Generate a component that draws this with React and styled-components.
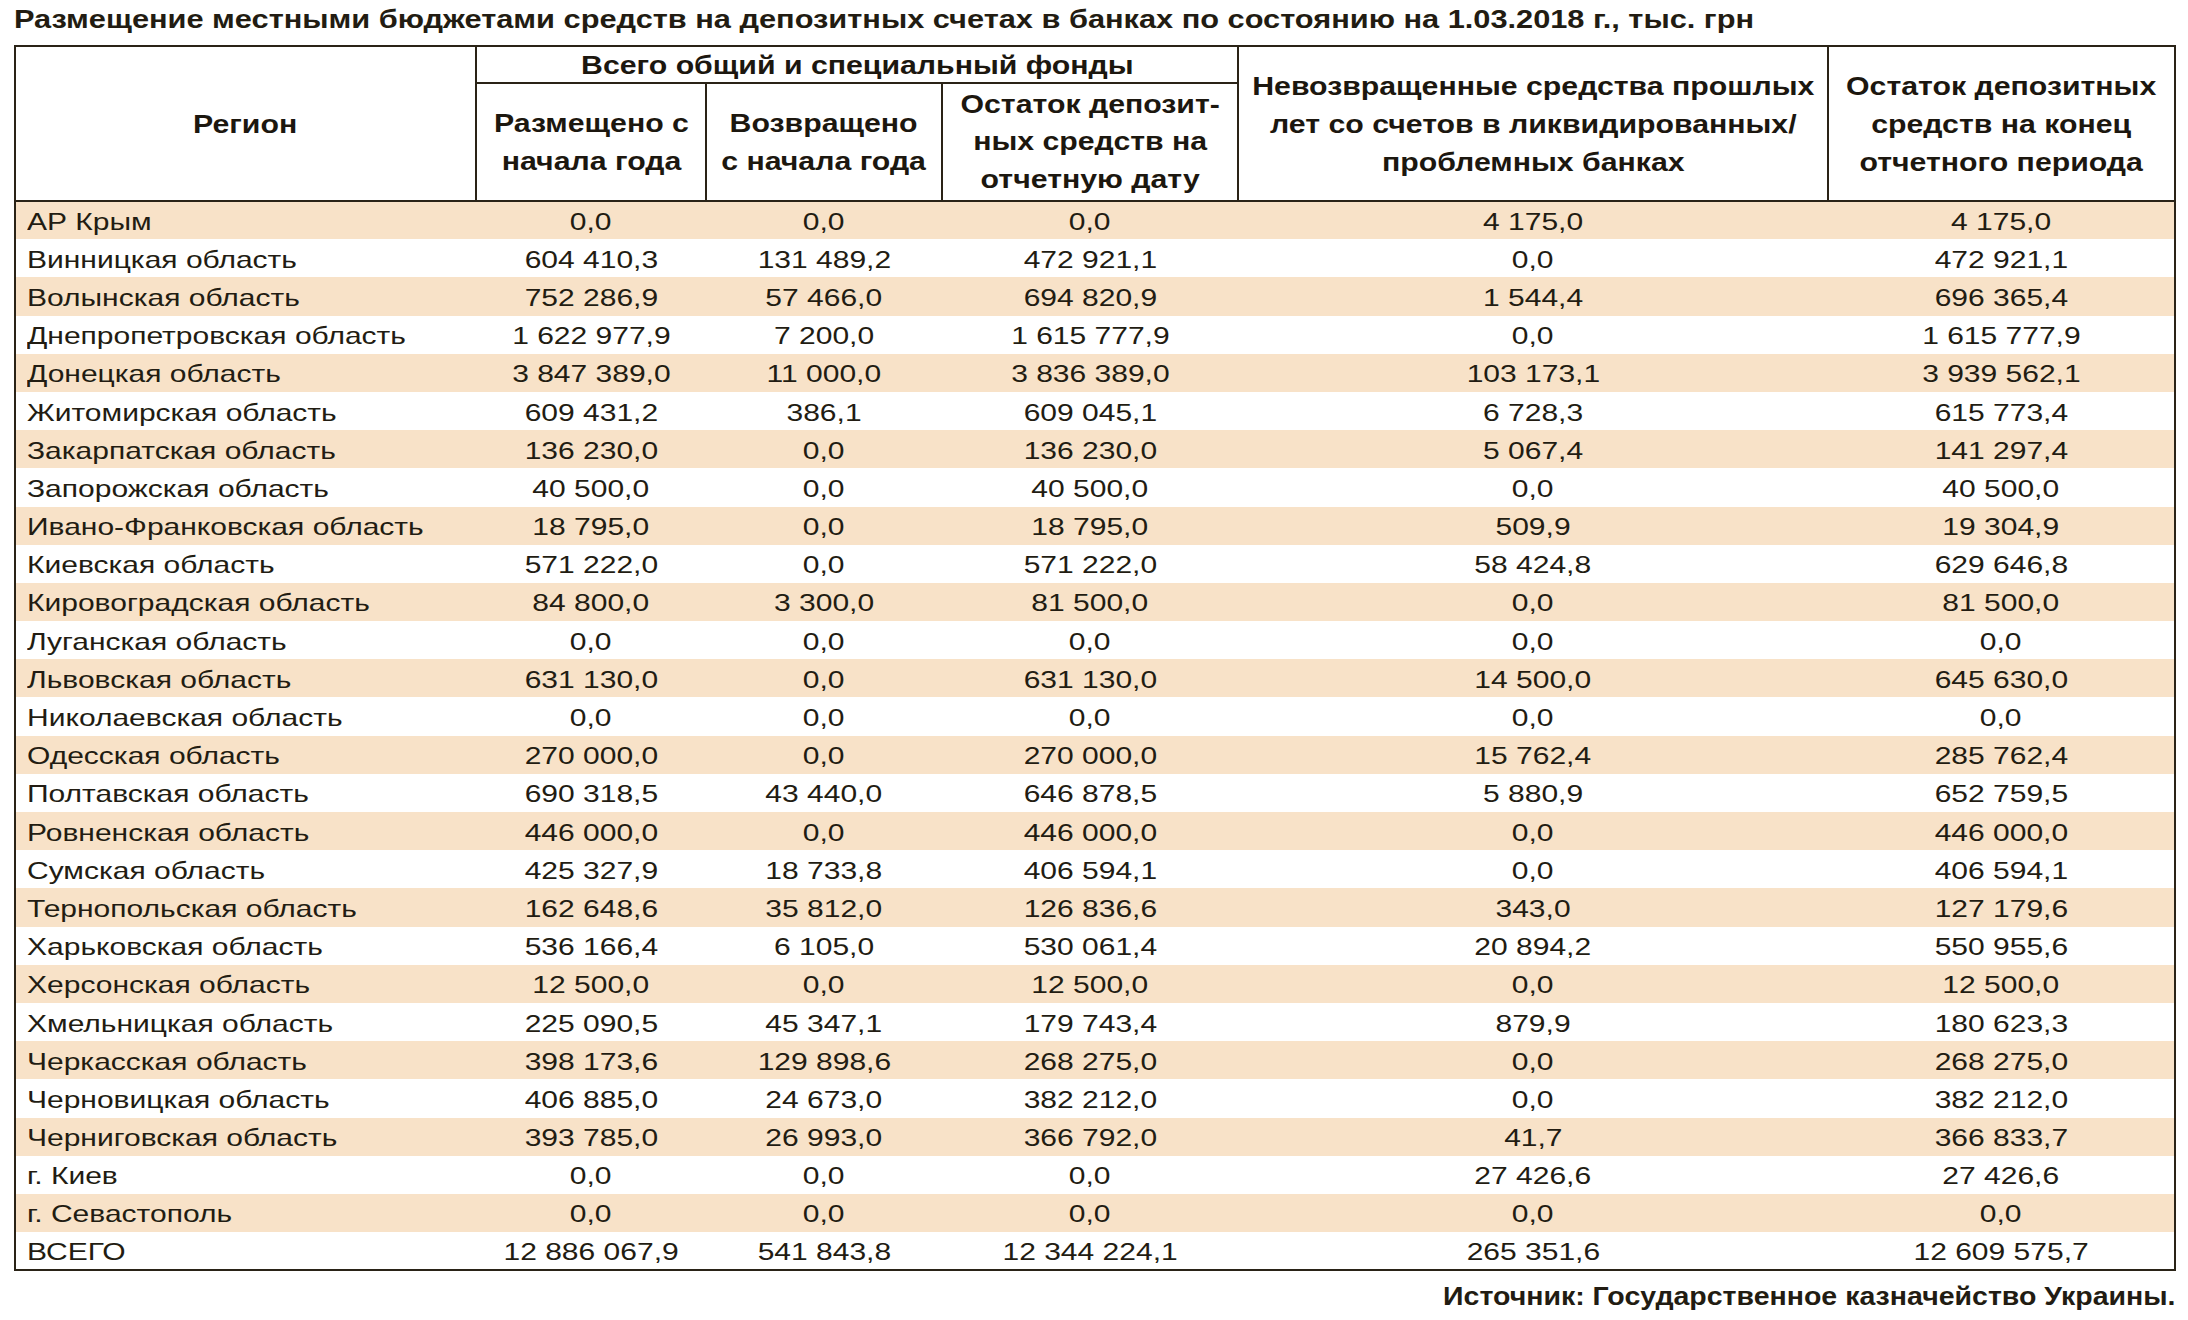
import styled, { createGlobalStyle } from 'styled-components';

const GlobalStyle = createGlobalStyle`
  body {
    margin: 0;
    background: #ffffff;
  }
`;

const rows = [
  ['АР Крым', '0,0', '0,0', '0,0', '4 175,0', '4 175,0'],
  ['Винницкая область', '604 410,3', '131 489,2', '472 921,1', '0,0', '472 921,1'],
  ['Волынская область', '752 286,9', '57 466,0', '694 820,9', '1 544,4', '696 365,4'],
  ['Днепропетровская область', '1 622 977,9', '7 200,0', '1 615 777,9', '0,0', '1 615 777,9'],
  ['Донецкая область', '3 847 389,0', '11 000,0', '3 836 389,0', '103 173,1', '3 939 562,1'],
  ['Житомирская область', '609 431,2', '386,1', '609 045,1', '6 728,3', '615 773,4'],
  ['Закарпатская область', '136 230,0', '0,0', '136 230,0', '5 067,4', '141 297,4'],
  ['Запорожская область', '40 500,0', '0,0', '40 500,0', '0,0', '40 500,0'],
  ['Ивано-Франковская область', '18 795,0', '0,0', '18 795,0', '509,9', '19 304,9'],
  ['Киевская область', '571 222,0', '0,0', '571 222,0', '58 424,8', '629 646,8'],
  ['Кировоградская область', '84 800,0', '3 300,0', '81 500,0', '0,0', '81 500,0'],
  ['Луганская область', '0,0', '0,0', '0,0', '0,0', '0,0'],
  ['Львовская область', '631 130,0', '0,0', '631 130,0', '14 500,0', '645 630,0'],
  ['Николаевская область', '0,0', '0,0', '0,0', '0,0', '0,0'],
  ['Одесская область', '270 000,0', '0,0', '270 000,0', '15 762,4', '285 762,4'],
  ['Полтавская область', '690 318,5', '43 440,0', '646 878,5', '5 880,9', '652 759,5'],
  ['Ровненская область', '446 000,0', '0,0', '446 000,0', '0,0', '446 000,0'],
  ['Сумская область', '425 327,9', '18 733,8', '406 594,1', '0,0', '406 594,1'],
  ['Тернопольская область', '162 648,6', '35 812,0', '126 836,6', '343,0', '127 179,6'],
  ['Харьковская область', '536 166,4', '6 105,0', '530 061,4', '20 894,2', '550 955,6'],
  ['Херсонская область', '12 500,0', '0,0', '12 500,0', '0,0', '12 500,0'],
  ['Хмельницкая область', '225 090,5', '45 347,1', '179 743,4', '879,9', '180 623,3'],
  ['Черкасская область', '398 173,6', '129 898,6', '268 275,0', '0,0', '268 275,0'],
  ['Черновицкая область', '406 885,0', '24 673,0', '382 212,0', '0,0', '382 212,0'],
  ['Черниговская область', '393 785,0', '26 993,0', '366 792,0', '41,7', '366 833,7'],
  ['г. Киев', '0,0', '0,0', '0,0', '27 426,6', '27 426,6'],
  ['г. Севастополь', '0,0', '0,0', '0,0', '0,0', '0,0'],
  ['ВСЕГО', '12 886 067,9', '541 843,8', '12 344 224,1', '265 351,6', '12 609 575,7'],
];

const colWidths = [461, 230, 236, 296, 590, 347];

const ink = '#221c12';
const rule = '#2a2317';

const Page = styled.div`
  box-sizing: border-box;
  width: 2188px;
  padding: 4px 0 0 14px;
  font-family: 'Liberation Sans', Arial, sans-serif;
  color: ${ink};
`;

// the print face is wider than Arial, so glyphs get stretched a bit
const Stretch = styled.span`
  display: inline-block;
  white-space: nowrap;
  transform: scaleX(${(props) => props.$scale || 1.25});
  transform-origin: ${(props) => props.$origin || 'center'};
`;

const Title = styled.h1`
  margin: 0 0 11px;
  font-size: 25px;
  line-height: 30px;
  font-weight: 700;
`;

const Table = styled.table`
  width: 2161px;
  table-layout: fixed;
  border-collapse: collapse;
  border: 2px solid ${rule};
`;

const HeadRow = styled.tr`
  height: ${(props) => props.$h}px;
`;

const HeadCell = styled.th`
  padding: 0;
  border: 2px solid ${rule};
  font-size: 25px;
  line-height: ${(props) => props.$lh || 38}px;
  font-weight: 700;
  text-align: center;
  vertical-align: middle;
  color: #1c170f;
`;

const BodyRow = styled.tr`
  height: 38.2px;
  background: ${(props) => (props.$shade ? '#f8e2c8' : '#ffffff')};
`;

const Cell = styled.td`
  padding: 3px 0 0 ${(props) => (props.$left ? '11px' : '0')};
  font-size: 24px;
  line-height: 34px;
  text-align: ${(props) => (props.$left ? 'left' : 'center')};
  vertical-align: middle;
  white-space: nowrap;
`;

const Source = styled.div`
  width: 2161px;
  margin-top: 10px;
  text-align: right;
  font-size: 25px;
  line-height: 30px;
  font-weight: 700;
`;

function HeadText({ children }) {
  return <Stretch $scale={1.21}>{children}</Stretch>;
}

function DepositTable() {
  return (
    <Table>
      <colgroup>
        {colWidths.map((w, i) => (
          <col key={i} style={{ width: w }} />
        ))}
      </colgroup>
      <thead>
        <HeadRow $h={37}>
          <HeadCell rowSpan={2}>
            <HeadText>Регион</HeadText>
          </HeadCell>
          <HeadCell colSpan={3} $lh={32}>
            <HeadText>Всего общий и специальный фонды</HeadText>
          </HeadCell>
          <HeadCell rowSpan={2}>
            <HeadText>
              Невозвращенные средства прошлых
              <br />
              лет со счетов в ликвидированных/
              <br />
              проблемных банках
            </HeadText>
          </HeadCell>
          <HeadCell rowSpan={2}>
            <HeadText>
              Остаток депозитных
              <br />
              средств на конец
              <br />
              отчетного периода
            </HeadText>
          </HeadCell>
        </HeadRow>
        <HeadRow $h={118}>
          <HeadCell>
            <HeadText>
              Размещено с
              <br />
              начала года
            </HeadText>
          </HeadCell>
          <HeadCell>
            <HeadText>
              Возвращено
              <br />с начала года
            </HeadText>
          </HeadCell>
          <HeadCell $lh={37.5}>
            <HeadText>
              Остаток депозит-
              <br />
              ных средств на
              <br />
              отчетную дату
            </HeadText>
          </HeadCell>
        </HeadRow>
      </thead>
      <tbody>
        {rows.map((row, i) => (
          <BodyRow key={row[0]} $shade={i % 2 === 0}>
            {row.map((value, j) => (
              <Cell key={j} $left={j === 0}>
                <Stretch $origin={j === 0 ? 'left' : 'center'}>{value}</Stretch>
              </Cell>
            ))}
          </BodyRow>
        ))}
      </tbody>
    </Table>
  );
}

export default function App() {
  return (
    <Page>
      <GlobalStyle />
      <Title>
        <Stretch $origin="left" $scale={1.23}>
          Размещение местными бюджетами средств на депозитных счетах в банках по
          состоянию на 1.03.2018 г., тыс. грн
        </Stretch>
      </Title>
      <DepositTable />
      <Source>
        <Stretch $origin="right" $scale={1.14}>
          Источник: Государственное казначейство Украины.
        </Stretch>
      </Source>
    </Page>
  );
}
